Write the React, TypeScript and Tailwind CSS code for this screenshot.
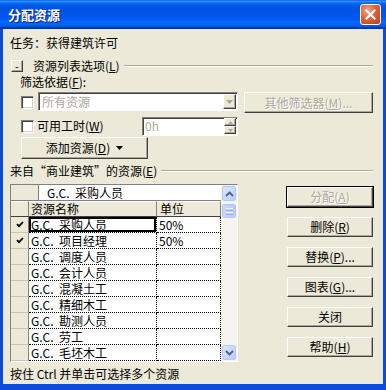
import React from 'react';

const names = ['采购人员', '项目经理', '调度人员', '会计人员', '混凝土工', '精细木工', '勘测人员', '劳工', '毛坯木工'];
const units = ['50%', '50%', '', '', '', '', '', '', ''];

const Btn = ({
  children,
  className = '',
  disabled = false,
  isDefault = false,
}: {
  children?: React.ReactNode;
  className?: string;
  disabled?: boolean;
  isDefault?: boolean;
}) => (
  <div
    className={`flex items-center justify-center bg-[#ECE9D8] border border-t-white border-l-white border-r-[#404040] border-b-[#404040] shadow-[inset_-1px_-1px_0_#ACA899] leading-[14px] ${
      isDefault ? 'outline outline-1 outline-black' : ''
    } ${disabled ? 'text-[#ACA899] [text-shadow:1px_1px_0_#fff]' : 'text-black'} ${className}`}
  >
    {children}
  </div>
);

const CheckBox = () => (
  <div className="w-[13px] h-[13px] shrink-0 bg-white border border-t-[#808080] border-l-[#808080] border-r-white border-b-white shadow-[inset_1px_1px_0_#404040,inset_-1px_-1px_0_#D4D0C8]" />
);

const Etched = () => <div className="flex-1 h-0 border-t border-t-[#ACA899] border-b border-b-white" />;

const Tick = () => (
  <svg width="8" height="7" viewBox="0 0 8 7">
    <path d="M1 3.2 L3 5.2 L7 1" fill="none" stroke="#000" strokeWidth="1.8" />
  </svg>
);

const ScrollBtn = ({ up }: { up: boolean }) => (
  <div className="h-[15px] mx-[1px] rounded-[2px] border border-[#B4C8F6] bg-[linear-gradient(135deg,#DCE6FE,#BACDFB)] flex items-center justify-center">
    <svg width="9" height="6" viewBox="0 0 9 6">
      <path d={up ? 'M1 5 L4.5 1.5 L8 5' : 'M1 1 L4.5 4.5 L8 1'} fill="none" stroke="#4D6185" strokeWidth="1.8" />
    </svg>
  </div>
);

const App = () => {
  return (
    <div className="w-[386px] h-[390px] flex flex-col font-['Noto_Sans_CJK_SC',sans-serif] text-[12px] text-black">
      <div className="h-[29px] shrink-0 flex items-center pl-[8px] pr-[5px] bg-[linear-gradient(#0058ee_0%,#3593ff_4%,#288eff_6%,#127dff_8%,#036ffc_10%,#0262ee_14%,#0057e5_20%,#0054e3_24%,#0055eb_56%,#005bf5_66%,#026afe_76%,#0062ef_86%,#0052d6_92%,#0040ab_94%,#003092_100%)]">
        <span className="text-white font-bold text-[13px] [text-shadow:1px_1px_0_#0A1883]">分配资源</span>
        <div className="ml-auto w-[21px] h-[21px] rounded-[3px] border border-white bg-[radial-gradient(circle_at_35%_30%,#F2AA8E,#E0623A_45%,#C23A14)] flex items-center justify-center">
          <svg width="11" height="11" viewBox="0 0 11 11">
            <path d="M1.5 1.5 L9.5 9.5 M9.5 1.5 L1.5 9.5" stroke="#fff" strokeWidth="2.2" strokeLinecap="square" />
          </svg>
        </div>
      </div>

      <div className="flex-1 flex flex-col bg-[#ECE9D8] border-x-[3px] border-b-[6px] border-t-0 border-[#0B4BDA] pl-[7px] pr-[10px] pt-[6px]">
        <div className="h-[16px] leading-[16px]">任务：获得建筑许可</div>

        <div className="mt-[8px] h-[14px] flex items-center">
          <Btn className="ml-[1px] w-[12px] h-[12px] text-[11px]">-</Btn>
          <span className="ml-[10px] leading-[14px]">
            资源列表选项(<u>L</u>)
          </span>
          <div className="ml-[4px] flex-1 flex">
            <Etched />
          </div>
        </div>

        <div className="mt-[2px] h-[14px] leading-[14px] pl-[10px]">
          筛选依据(<u>F</u>):
        </div>

        <div className="mt-[3px] h-[21px] flex items-start">
          <div className="ml-[11px] mt-[4px]">
            <CheckBox />
          </div>
          <div className="ml-[4px] w-[200px] h-[19px] flex items-center bg-white border border-t-[#808080] border-l-[#808080] border-r-white border-b-white shadow-[inset_1px_1px_0_#404040]">
            <span className="pl-[3px] flex-1 text-[#ACA899] leading-[14px]">所有资源</span>
            <Btn className="w-[13px] h-[15px] mr-[1px]">
              <svg width="7" height="4" viewBox="0 0 7 4">
                <path d="M0 0 L7 0 L3.5 4 Z" fill="#ACA899" />
              </svg>
            </Btn>
          </div>
          <Btn disabled className="ml-[6px] w-[129px] h-[21px]">
            其他筛选器(<u>M</u>)...
          </Btn>
        </div>

        <div className="mt-[3px] h-[20px] flex items-center">
          <div className="ml-[11px]">
            <CheckBox />
          </div>
          <span className="ml-[3px] w-[105px] leading-[14px]">
            可用工时(<u>W</u>)
          </span>
          <div className="w-[96px] h-[19px] flex items-center bg-white border border-t-[#808080] border-l-[#808080] border-r-white border-b-white shadow-[inset_1px_1px_0_#404040]">
            <span className="pl-[2px] flex-1 text-[#ACA899] leading-[14px]">0h</span>
            <div className="flex flex-col mr-[1px]">
              <Btn className="w-[12px] h-[8px]">
                <svg width="5" height="3" viewBox="0 0 5 3">
                  <path d="M0 3 L5 3 L2.5 0 Z" fill="#ACA899" />
                </svg>
              </Btn>
              <Btn className="w-[12px] h-[8px]">
                <svg width="5" height="3" viewBox="0 0 5 3">
                  <path d="M0 0 L5 0 L2.5 3 Z" fill="#ACA899" />
                </svg>
              </Btn>
            </div>
          </div>
        </div>

        <Btn className="mt-[1px] ml-[11px] w-[127px] h-[22px] gap-[6px]">
          <span>
            添加资源(<u>D</u>)
          </span>
          <svg width="7" height="4" viewBox="0 0 7 4">
            <path d="M0 0 L7 0 L3.5 4 Z" fill="#000" />
          </svg>
        </Btn>

        <div className="mt-[5px] h-[14px] flex items-center">
          <span className="leading-[14px]">
            来自“商业建筑”的资源(<u>E</u>)
          </span>
          <div className="ml-[4px] flex-1 flex">
            <Etched />
          </div>
        </div>

        <div className="mt-[6px] flex items-start">
          <div className="w-[228px] h-[178px] flex border border-t-[#808080] border-l-[#808080] border-r-white border-b-white bg-[#ECE9D8]">
            <div className="w-[210px] flex flex-col">
              <div className="h-[16px] flex border-b border-[#808080]">
                <div className="w-[28px] border-r border-[#808080]" />
                <div className="flex-1 bg-white pl-[8px] leading-[15px]">G.C.&nbsp; 采购人员</div>
              </div>
              <div className="h-[16px] flex border-b border-[#404040] leading-[13px]">
                <div className="w-[18px] border-r border-[#808080] border-t border-t-white" />
                <div className="w-[128px] border-r border-[#808080] border-t border-t-white pl-[2px]">资源名称</div>
                <div className="flex-1 border-r border-[#808080] border-t border-t-white pl-[3px]">单位</div>
              </div>
              {names.map((n, i) => (
                <div key={n} className="h-[16px] flex leading-[15px]">
                  <div className="w-[18px] flex items-center justify-center border-r border-b border-r-[#808080] border-b-[#C8C4B4]">
                    {i < 2 ? <Tick /> : null}
                  </div>
                  <div
                    className={`w-[128px] bg-white border-r border-b border-dotted border-black pl-[2px] ${
                      i === 0 ? 'shadow-[inset_0_0_0_2px_#000]' : ''
                    }`}
                  >
                    G.C.&nbsp; {n}
                  </div>
                  <div className="flex-1 bg-white border-r border-b border-dotted border-black pl-[2px]">{units[i]}</div>
                </div>
              ))}
            </div>
            <div className="w-[16px] flex flex-col bg-[#F5F4EF] pt-[1px] pb-[1px]">
              <ScrollBtn up />
              <div className="mt-[3px] h-[14px] mx-[1px] rounded-[2px] border border-[#B4C8F6] bg-[linear-gradient(90deg,#C9D8FD,#B9CCFA)] flex flex-col items-center justify-center gap-[1px]">
                <div className="w-[7px] h-[1px] bg-[#EEF4FE]" />
                <div className="w-[7px] h-[1px] bg-[#8CB0F8]" />
                <div className="w-[7px] h-[1px] bg-[#EEF4FE]" />
                <div className="w-[7px] h-[1px] bg-[#8CB0F8]" />
              </div>
              <div className="flex-1" />
              <ScrollBtn up={false} />
            </div>
          </div>

          <div className="ml-[49px] pt-[3px] flex flex-col gap-[10px]">
            <Btn disabled isDefault className="w-[86px] h-[20px]">
              分配(<u>A</u>)
            </Btn>
            <Btn className="w-[86px] h-[20px]">
              删除(<u>R</u>)
            </Btn>
            <Btn className="w-[86px] h-[20px]">
              替换(<u>P</u>)...
            </Btn>
            <Btn className="w-[86px] h-[20px]">
              图表(<u>G</u>)...
            </Btn>
            <Btn className="w-[86px] h-[20px]">关闭</Btn>
            <Btn className="w-[86px] h-[20px]">
              帮助(<u>H</u>)
            </Btn>
          </div>
        </div>

        <div className="mt-[5px] h-[14px] leading-[14px]">按住 Ctrl 并单击可选择多个资源</div>
      </div>
    </div>
  );
};

export default App;
